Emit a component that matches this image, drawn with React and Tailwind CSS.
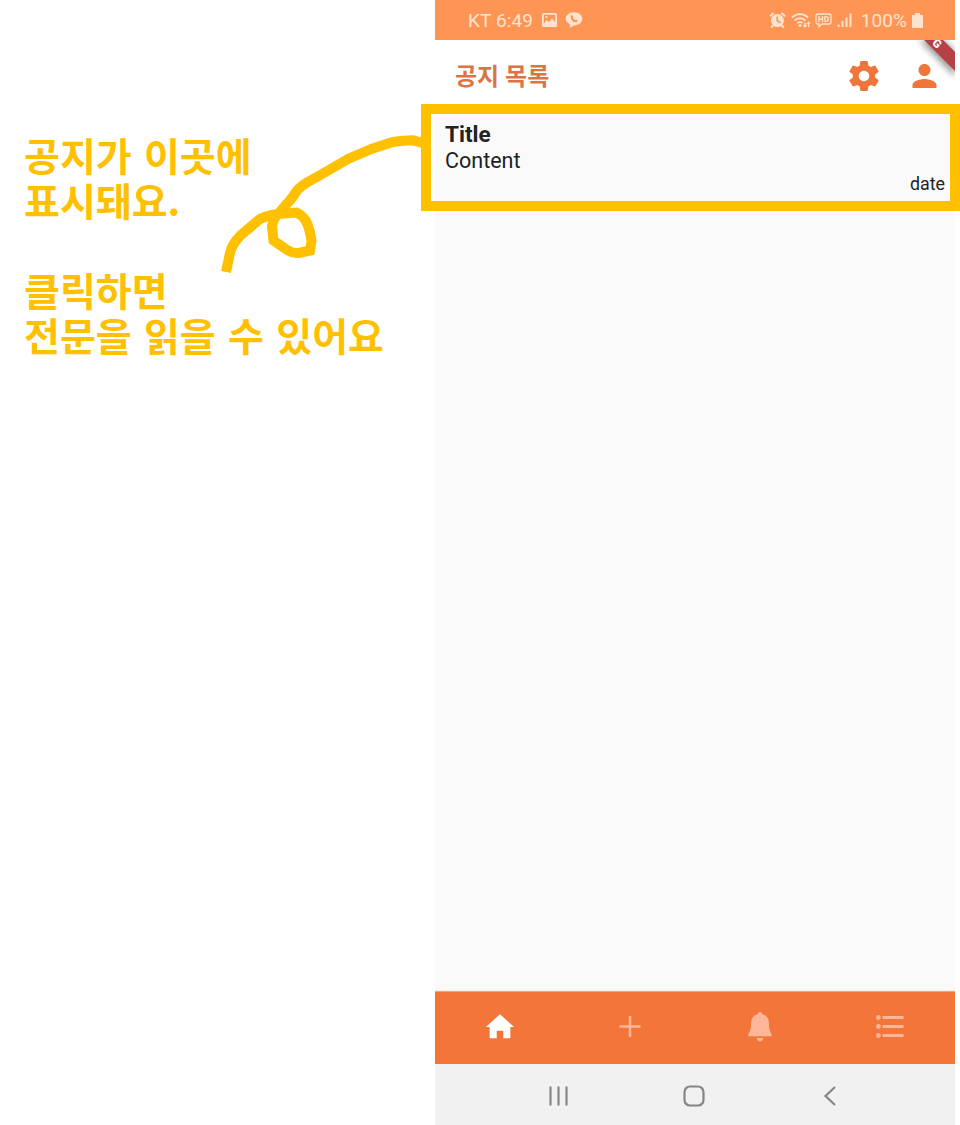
const NOTE_LINES = ['공지가 이곳에', '표시돼요.', '', '클릭하면', '전문을 읽을 수 있어요'];

function StatusBar() {
  return (
    <div className="flex h-10 shrink-0 items-center bg-[#ff9554] pr-[32px] pl-[33px] text-[#ffe3cf]">
      <span className="text-[19px] leading-[41px] tracking-[0.1px]">KT 6:49</span>
      <svg className="ml-[9px]" width="15" height="14" viewBox="0 0 15 14">
        <path fill="currentColor" fillRule="evenodd" d="M1.500 0h12Q15 0 15 1.500v11Q15 14 13.500 14h-12Q0 14 0 12.500v-11Q0 0 1.500 0ZM1.800 1.800V10.500L4.800 7l2 2.200L10 5l3.200 4.500V1.800ZM4.500 3a1.100 1.100 0 1 1 0 2.200 1.100 1.100 0 0 1 0-2.200Z" />
      </svg>
      <svg className="ml-[8px]" width="18" height="16" viewBox="0 0 18 16">
        <path fill="currentColor" d="M9 .2c4.700 0 8.300 2.900 8.300 6.600S13.700 13.400 9 13.400l-4.300 2.300.3-3.300C2.300 11.300.7 9.300.7 6.800.7 3.100 4.300.2 9 .2Z" />
        <path fill="none" stroke="#ff9554" strokeWidth="2.200" d="M7.200 3.500c-1.300 3.500 1.500 6.500 5 5.300" />
      </svg>
      <div className="ml-auto flex items-center">
        <svg width="17" height="17" viewBox="0 0 17 17">
          <circle cx="8.500" cy="8.600" r="6.500" fill="currentColor" />
          <path d="M1 4.200 4.500 1.100M16 4.200l-3.500-3.100M4 13.500l-1.800 2M13 13.500l1.800 2" stroke="currentColor" strokeWidth="2" />
          <path d="M8.200 4.500v4.300l3.600 2" fill="none" stroke="#ff9554" strokeWidth="1.600" />
        </svg>
        <svg className="ml-[5px]" width="20" height="17" viewBox="0 0 20 17">
          <g fill="none" stroke="currentColor" strokeWidth="1.800">
            <path d="M1 5.500c4.600-4.500 11.400-4.500 16 0M3.600 8.500c3-3 7.800-3 10.800 0M6.300 11.200c1.500-1.500 3.900-1.500 5.400 0" />
          </g>
          <circle cx="9" cy="13.500" r="1.500" fill="currentColor" />
          <path fill="currentColor" d="M11.800 13h1.500v-2.500h1.400V13h1.500L14 16ZM15.500 12 17.500 9l2 3h-1.300v3h-1.400v-3Z" />
        </svg>
        <svg className="ml-[4px]" width="17" height="17" viewBox="0 0 17 17">
          <path d="M3 2h11q2 0 2 2v6q0 2-2 2H7l-3 3v-3H3q-2 0-2-2V4q0-2 2-2Z" fill="none" stroke="currentColor" strokeWidth="1.300" />
          <path d="M4 4v6M7.500 4v6M4 7h3.500M10 4.600v4.800h1.100q2.200 0 2.200-2.400t-2.200-2.400Z" fill="none" stroke="currentColor" strokeWidth="1.400" />
        </svg>
        <svg className="ml-[5px]" width="16" height="15" viewBox="0 0 16 15">
          <path d="M1.500 11.500v2.500M5.500 8V14M9.500 4.500V14M13.500 .5V14" stroke="currentColor" strokeWidth="2" />
        </svg>
        <span className="ml-[8px] text-[19px] leading-[41px] tracking-[0.1px]">100%</span>
        <svg className="ml-[5px]" width="11" height="15" viewBox="0 0 11 15">
          <path fill="currentColor" d="M3 0h5v2h3v13H0V2h3Z" />
        </svg>
      </div>
    </div>
  );
}

function AppBar() {
  return (
    <header className="relative flex h-[72px] shrink-0 items-center overflow-hidden bg-white pb-px pl-[20px] text-[#f1743b]">
      <h1 className="pt-[3px] text-[24px] leading-[70px] font-bold text-[#db7347]">공지 목록</h1>
      <svg className="ml-auto" width="36" height="36" viewBox="0 0 24 24" fill="currentColor">
        <path d="M19.430 12.980c.04-.32.07-.64.07-.98s-.03-.66-.07-.98l2.110-1.650c.19-.15.24-.42.12-.64l-2-3.460c-.12-.22-.39-.3-.61-.22l-2.490 1c-.52-.4-1.080-.73-1.690-.98l-.38-2.650C14.460 2.180 14.250 2 14 2h-4c-.25 0-.46.18-.49.42l-.38 2.650c-.61.25-1.170.59-1.690.98l-2.490-1c-.23-.09-.49 0-.61.22l-2 3.460c-.13.22-.07.49.12.64l2.110 1.650c-.04.32-.07.65-.07.98s.03.66.07.98l-2.110 1.650c-.19.15-.24.42-.12.64l2 3.460c.12.22.39.3.61.22l2.490-1c.52.4 1.080.73 1.690.98l.38 2.650c.03.24.24.42.49.42h4c.25 0 .46-.18.49-.42l.38-2.650c.61-.25 1.170-.59 1.690-.98l2.490 1c.23.09.49 0 .61-.22l2-3.460c.12-.22.07-.49-.12-.64l-2.110-1.650zM12 15.500c-1.930 0-3.500-1.570-3.500-3.500s1.570-3.500 3.500-3.500 3.500 1.570 3.500 3.500-1.570 3.500-3.500 3.500z" />
      </svg>
      <svg className="mr-[12px] ml-[24px]" width="37" height="36" viewBox="0 0 24 24" fill="currentColor">
        <path d="M12 12c2.210 0 4-1.790 4-4s-1.790-4-4-4-4 1.790-4 4 1.790 4 4 4zm0 2c-2.670 0-8 1.340-8 4v2h16v-2c0-2.660-5.330-4-8-4z" />
      </svg>
      <svg className="absolute top-0 right-0" width="50" height="50" viewBox="0 0 50 50">
        <defs>
          <filter id="ribbon-shadow" x="-50%" y="-50%" width="200%" height="200%">
            <feGaussianBlur stdDeviation="3" />
          </filter>
        </defs>
        <path d="M14 0H39L50 11V37Z" fill="#666" opacity=".65" filter="url(#ribbon-shadow)" />
        <path d="M19 0H38L50 12V31Z" fill="#b54146" />
        <text x="26.500" y="3.500" transform="rotate(45 26.500 3.500)" fontSize="11.500" fontWeight="900" fill="#fff">G</text>
      </svg>
    </header>
  );
}

function NoticeItem({ title, content, date }) {
  return (
    <article className="flex flex-col bg-[#fafafa] px-[10px] pt-[9px] text-[#222]">
      <h2 className="text-[22.5px] leading-[26px] font-bold">{title}</h2>
      <p className="text-[21.500px] leading-[27px]">{content}</p>
      <time className="self-end text-[17.800px] leading-[19px]">{date}</time>
    </article>
  );
}

function TabBar() {
  return (
    <nav className="grid h-[73px] shrink-0 grid-cols-4 place-items-center border-t border-[#f6a37c] bg-[#f47539] pb-[2px] text-[#fbb797]">
      <svg width="34" height="34" viewBox="0 0 24 24" fill="#fff">
        <path d="M9.700 20v-5.300h4.600V20h5v-8H22L12 3 2 12h2.700v8z" />
      </svg>
      <svg width="34" height="34" viewBox="0 0 34 34">
        <path d="M17 6v21M6.500 16.500h21" stroke="currentColor" strokeWidth="2.500" />
      </svg>
      <svg width="34" height="34" viewBox="0 0 34 34" fill="currentColor">
        <path d="M17 2c1.400 0 2.200.9 2.300 2.200 4.500 1 6.500 4.400 6.600 8.800.1 5.700.8 8.500 2.900 11.300V26.200H5.200v-1.900c2.100-2.800 2.800-5.600 2.900-11.300.1-4.400 2.100-7.800 6.600-8.800C14.800 2.900 15.600 2 17 2ZM13.700 28h6.600c-.5 2.400-1.600 3.600-3.300 3.600S14.200 30.400 13.700 28Z" />
      </svg>
      <svg width="34" height="34" viewBox="0 0 34 34" fill="currentColor">
        <circle cx="5.400" cy="7.500" r="2.400" />
        <circle cx="5.400" cy="16.500" r="2.400" />
        <circle cx="5.400" cy="25.500" r="2.400" />
        <path d="M9.500 5.900h21v3.200h-21ZM9.500 14.900h21v3.200h-21ZM9.500 23.900h21v3.200h-21Z" />
      </svg>
    </nav>
  );
}

function SystemNav() {
  return (
    <div className="flex h-[61px] shrink-0 items-center justify-center gap-[112px] bg-[#f1f1f1] pt-[2px] pr-[2px] text-[#858585]">
      <svg width="24" height="24" viewBox="0 0 24 24">
        <path d="M4.500 2.500v19M12.500 2.500v19M20.500 2.500v19" stroke="currentColor" strokeWidth="2.200" />
      </svg>
      <svg width="24" height="24" viewBox="0 0 24 24">
        <rect x="2.500" y="2.500" width="19" height="19" rx="5.500" fill="none" stroke="currentColor" strokeWidth="2.200" />
      </svg>
      <svg width="24" height="24" viewBox="0 0 24 24">
        <path d="M17 3 7.500 12 17 21" fill="none" stroke="currentColor" strokeWidth="2.200" />
      </svg>
    </div>
  );
}

export default function App() {
  return (
    <div className="relative flex h-[1125px] w-[960px] overflow-hidden bg-white font-['Roboto','Noto_Sans_CJK_KR',sans-serif]">
      <aside className="w-[435px] shrink-0 pt-[132px] pl-[24px] font-['Noto_Sans_CJK_KR',sans-serif] text-[39px] leading-[45px] font-bold whitespace-nowrap text-[#ffc000] [word-spacing:3.500px]">
        {NOTE_LINES.map((line, i) => (
          <p key={i} className="h-[45px]">{line}</p>
        ))}
      </aside>
      <main className="flex h-full w-[520px] shrink-0 flex-col bg-[#fafafa]">
        <StatusBar />
        <AppBar />
        <section className="flex-1 border-b border-[#eee]">
          <NoticeItem title="Title" content="Content" date="date" />
        </section>
        <TabBar />
        <SystemNav />
      </main>
      <div className="absolute top-[104px] left-[421px] h-[107px] w-[539px] border-[10px] border-[#ffc000]" />
      <svg className="absolute top-[125px] left-[210px]" width="215" height="155" viewBox="210 125 215 155">
        <path
          d="M226 272 230 253Q232 244 241 235L260 219Q268 215 278 214L296.500 212.500Q302 215 306 221Q310 229 311.500 241L310 250.500 299 253Q293 253.500 288 250.500L273.500 240.500 272 226Q274 217 280 212L287 203.500Q291 200 297 190.500Q300 187 307 182.500L323 173.500 348 159 372 148.700 393 142Q403 140.500 413 140.300L424 143.500"
          fill="none"
          stroke="#ffc000"
          strokeWidth="10"
        />
      </svg>
    </div>
  );
}
